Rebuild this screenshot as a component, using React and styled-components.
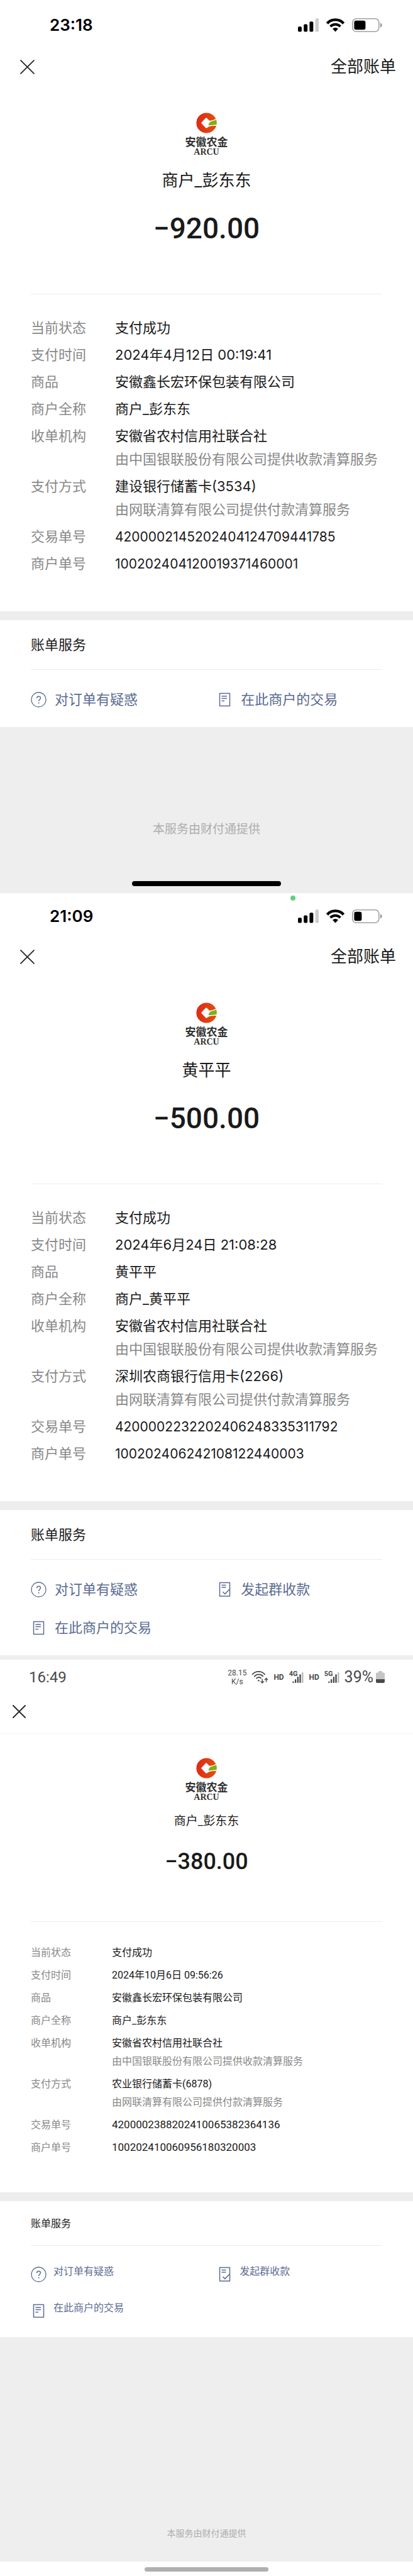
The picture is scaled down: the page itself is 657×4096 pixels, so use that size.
import React from "react";
import styled, { createGlobalStyle } from "styled-components";

const Global = createGlobalStyle`
  *, *::before, *::after { box-sizing: border-box; }
  body { margin: 0; background: #fff; color: #1a1a1a; }
  button { border: 0; padding: 0; background: none; color: inherit; font: inherit; cursor: pointer; }
  a { color: inherit; text-decoration: none; }
  svg { display: block; flex: none; }
`;

const IOS = {
  font: `Inter, "Noto Sans CJK SC", sans-serif`,
  size: 22,
  number: 21,
  line: 37,
  rowGap: 6,
  labelWidth: 134,
  title: 26,
  titleLine: 40,
  amount: 46,
  amountTop: 28,
  amountBottom: 76,
  detailTop: 35,
  detailBottom: 57,
};

const ANDROID = {
  font: `Roboto, "Noto Sans CJK SC", sans-serif`,
  size: 16,
  number: 17,
  line: 29,
  rowGap: 7,
  labelWidth: 129,
  title: 19,
  titleLine: 28,
  amount: 36,
  amountTop: 22,
  amountBottom: 67,
  detailTop: 34,
  detailBottom: 57,
};

const Screen = styled.section`
  display: flex;
  flex-direction: column;
  font-family: ${(p) => p.$t.font};
  font-size: ${(p) => p.$t.size}px;
`;

const StatusBar = styled.div`
  display: flex;
  align-items: center;
  justify-content: space-between;
  height: ${(p) => p.$height}px;
  padding: ${(p) => p.$pad};
`;

const Clock = styled.time`
  font-size: 26px;
  font-weight: 600;
  line-height: 32px;
  color: #000;
`;

const AndroidClock = styled.time`
  font-size: 24px;
  line-height: 32px;
  color: #4a4a4a;
`;

const StatusIcons = styled.div`
  display: flex;
  align-items: center;
  gap: ${(p) => p.$gap}px;
  color: #4a4a4a;
`;

const Speed = styled.span`
  font-size: 12px;
  line-height: 14px;
  text-align: center;
`;

const Hd = styled.span`
  font-size: 12px;
  font-weight: 700;
  line-height: 16px;
`;

const Signal = styled.span`
  display: flex;
  align-items: flex-end;
  height: 19px;
  svg { margin-left: -8px; }
`;

const Network = styled.span`
  align-self: flex-start;
  font-size: 11px;
  font-weight: 700;
  line-height: 9px;
`;

const Percent = styled.span`
  font-size: 25px;
  line-height: 32px;
  margin-right: -4px;
`;

const CameraDot = styled.i`
  position: absolute;
  top: 4px;
  left: 71%;
  width: 8px;
  height: 8px;
  margin-left: -4px;
  border-radius: 50%;
  background: #5fd07f;
`;

const Top = styled.div`
  position: relative;
`;

const NavBar = styled.header`
  display: flex;
  align-items: center;
  justify-content: space-between;
  height: ${(p) => p.$height}px;
  padding: ${(p) => p.$pad};
  border-bottom: ${(p) => (p.$line ? "1px solid #f3f3f3" : "0")};
`;

const AllBills = styled.a`
  font-size: 26px;
  line-height: 40px;
`;

const Merchant = styled.div`
  display: flex;
  flex-direction: column;
  align-items: center;
  padding-top: ${(p) => p.$top}px;
`;

const Logo = styled.figure`
  display: flex;
  flex-direction: column;
  align-items: center;
  margin: 0;
  color: #333;
  font-weight: 700;
`;

const LogoName = styled.span`
  margin-top: 5px;
  font-family: "Liberation Serif", "Noto Sans CJK SC", serif;
  font-size: 17px;
  line-height: 19px;
`;

const LogoLatin = styled.span`
  font-family: "Liberation Serif", serif;
  font-size: 14px;
  line-height: 12px;
`;

const MerchantName = styled.h1`
  margin: ${(p) => p.$top}px 0 0;
  font-size: ${(p) => p.$t.title}px;
  font-weight: 400;
  line-height: ${(p) => p.$t.titleLine}px;
`;

const Amount = styled.strong`
  margin: ${(p) => p.$t.amountTop}px 0 ${(p) => p.$t.amountBottom}px;
  font-family: Roboto, sans-serif;
  font-size: ${(p) => p.$t.amount}px;
  font-weight: 500;
  line-height: 56px;
`;

const Details = styled.dl`
  display: flex;
  flex-direction: column;
  gap: ${(p) => p.$t.rowGap}px;
  margin: 0 49px;
  padding: ${(p) => p.$t.detailTop}px 0 ${(p) => p.$t.detailBottom}px;
  border-top: 1px solid #ececec;
  line-height: ${(p) => p.$t.line}px;
`;

const Row = styled.div`
  display: flex;
`;

const Label = styled.dt`
  flex: none;
  width: ${(p) => p.$t.labelWidth}px;
  color: #888;
`;

const Value = styled.dd`
  margin: 0;
  white-space: nowrap;
  font-size: ${(p) => (p.$number ? p.$t.number : p.$t.size)}px;
`;

const Note = styled.div`
  color: #888;
`;

const Services = styled.section`
  padding: 0 49px ${(p) => p.$bottom}px;
  border-top: 14px solid #ededed;
`;

const ServicesTitle = styled.h2`
  margin: 0;
  padding: ${(p) => p.$pad};
  border-bottom: 1px solid #ececec;
  font-size: inherit;
  font-weight: 400;
  line-height: 32px;
`;

const ServiceGrid = styled.div`
  display: grid;
  grid-template-columns: 53fr 47fr;
  row-gap: ${(p) => p.$gap}px;
  padding-top: ${(p) => p.$top}px;
`;

const ServiceLink = styled.a`
  display: flex;
  align-items: ${(p) => (p.$raised ? "flex-start" : "center")};
  gap: ${(p) => (p.$raised ? 11 : 13)}px;
  height: 32px;
  color: #5b6b92;
  line-height: ${(p) => (p.$raised ? 24 : 32)}px;
  svg { margin-top: ${(p) => (p.$raised ? 4 : 0)}px; }
`;

const Footer = styled.footer`
  display: flex;
  flex-direction: column;
  align-items: center;
  padding-top: ${(p) => p.$top}px;
  background: #eee;
  color: #adadad;
  font-size: ${(p) => p.$size}px;
  line-height: 28px;
`;

const GestureArea = styled.div`
  display: flex;
  justify-content: center;
  width: 100%;
  margin-top: ${(p) => p.$gap}px;
  padding: ${(p) => p.$pad};
  background: ${(p) => (p.$white ? "#fff" : "none")};
`;

const GestureBar = styled.div`
  width: ${(p) => (p.$gray ? "30%" : "36%")};
  height: ${(p) => (p.$gray ? 7 : 8)}px;
  border-radius: 4px;
  background: ${(p) => (p.$gray ? "#b0b0b0" : "#000")};
`;

const CloseIcon = ({ size, weight }) => (
  <svg width={size} height={size} viewBox="0 0 22 22" fill="none" stroke="#2a2a2a" strokeWidth={weight} strokeLinecap="round">
    <path d="M1 1 21 21M21 1 1 21" />
  </svg>
);

const Bars = () => (
  <svg width="33" height="22" viewBox="0 0 183 120">
    <rect x="0" y="72" width="33" height="46" rx="10" />
    <rect x="51" y="52" width="33" height="66" rx="10" />
    <rect x="102" y="28" width="33" height="90" rx="10" />
    <rect x="153" y="1" width="31" height="117" rx="10" fill="#ccc" />
  </svg>
);

const Wifi = () => (
  <svg width="29" height="22" viewBox="290 61 160 121" fill="none" stroke="#000">
    <path d="M298 106A97 97 0 0 1 442 106" strokeWidth="24" />
    <path d="M326 133A63 63 0 0 1 414 133" strokeWidth="22" />
    <path d="M345 153Q370 133 395 153L370 180Z" fill="#000" stroke="none" />
  </svg>
);

const Battery = ({ level }) => (
  <svg width="48" height="22" viewBox="0 0 48 22">
    <rect x="0.8" y="0.8" width="42" height="20.4" rx="6" fill="none" stroke="#a0a0a0" strokeWidth="1.6" />
    <rect x="3.4" y="3.7" width={level} height="14.6" rx="3" />
    <path d="M45 7.5c3.400 1 3.400 6 0 7Z" fill="#909090" />
  </svg>
);

const AndroidWifi = () => (
  <svg width="27" height="20" viewBox="233 71 148 112" fill="none" stroke="currentColor" strokeWidth="10" strokeLinecap="round">
    <path d="M240 101A73 73 0 0 1 350 101M258 119A51 51 0 0 1 334 118M276 136A32 32 0 0 1 316 134" />
    <circle cx="296" cy="156" r="7" fill="currentColor" stroke="none" />
    <path d="M328 145V175M316 165 328 177 340 165M363 167V137M351 148 363 136 375 148" strokeWidth="8" />
  </svg>
);

const AndroidBars = () => (
  <svg width="18" height="17" viewBox="571 87 98 94" fill="currentColor">
    <circle cx="578" cy="174" r="7" />
    <rect x="592" y="148" width="13" height="33" rx="5" />
    <rect x="613" y="126" width="13" height="55" rx="5" />
    <rect x="633" y="105" width="13" height="76" rx="5" />
    <rect x="654" y="87" width="13" height="94" rx="5" fill="#b8b8b8" />
  </svg>
);

const AndroidBattery = () => (
  <svg width="14" height="19" viewBox="0 0 14 19">
    <path d="M4 1.500Q4 0 5.500 0h3Q10 0 10 1.500V2.500h2a2 2 0 0 1 2 2V13H0V4.500a2 2 0 0 1 2-2h2Z" fill="#c4c4c4" />
    <path d="M0 13h14v4a2 2 0 0 1-2 2H2a2 2 0 0 1-2-2Z" fill="#4a4a4a" />
  </svg>
);

const BankMark = () => (
  <svg width="33" height="33" viewBox="151 54 178 178">
    <defs>
      <linearGradient id="coin" x1="0" y1="0.4" x2="1" y2="0.5">
        <stop offset="0" stopColor="#dc2a16" />
        <stop offset="1" stopColor="#e5500e" />
      </linearGradient>
      <clipPath id="coinEdge">
        <circle cx="240" cy="143" r="88" />
      </clipPath>
    </defs>
    <g clipPath="url(#coinEdge)">
      <circle cx="240" cy="143" r="88" fill="url(#coin)" />
      <path d="M233 101Q238 96 243 101L266 124Q300 122 332 102V168Q290 164 262 174L243 186Q238 190 233 185L197 147Q194 143 197 139Z" fill="#fff" />
      <path d="M257 165C258 135 280 127 300 124C312 122 322 117 332 109V154C305 165 285 158 257 165Z" fill="#7fb016" />
    </g>
  </svg>
);

const QuestionIcon = () => (
  <svg width="25" height="25" viewBox="0 0 25 25" fill="none" stroke="currentColor" strokeWidth="1.3">
    <circle cx="12.5" cy="12.5" r="11.5" />
    <path d="M9.700 10.200c0-3.800 5.800-3.800 5.800-.4 0 2.400-2.900 2.500-2.900 5.200" strokeWidth="1.5" />
    <circle cx="12.6" cy="17.8" r="1" fill="currentColor" stroke="none" />
  </svg>
);

const BillIcon = ({ check }) => (
  <svg width="25" height="25" viewBox="0 0 25 25" fill="none" stroke="currentColor" strokeWidth="1.5" strokeLinejoin="round">
    {check ? (
      <>
        <rect x="4.500" y="1.500" width="16" height="21.500" />
        <path d="M7.500 5.500h7M7.500 9h7M9.500 16l3.200 3.600 7.500-7.600" />
      </>
    ) : (
      <>
        <rect x="4.5" y="2.5" width="16" height="20" />
        <path d="M7.500 7h8.500M7.500 10.500h8.500M7.500 14.500h4.500" />
      </>
    )}
  </svg>
);

const ICONS = {
  question: <QuestionIcon />,
  collect: <BillIcon check />,
  bill: <BillIcon />,
};

const MerchantBlock = ({ t, top, nameTop, name, amount }) => (
  <Merchant $top={top}>
    <Logo>
      <BankMark />
      <LogoName>安徽农金</LogoName>
      <LogoLatin>ARCU</LogoLatin>
    </Logo>
    <MerchantName $t={t} $top={nameTop}>{name}</MerchantName>
    <Amount $t={t}>{amount}</Amount>
  </Merchant>
);

const DetailList = ({ t, rows }) => (
  <Details $t={t}>
    {rows.map(([label, value, note]) => (
      <Row key={label}>
        <Label $t={t}>{label}</Label>
        <Value $t={t} $number={/^\d+$/.test(value)}>
          {value}
          {note && <Note>{note}</Note>}
        </Value>
      </Row>
    ))}
  </Details>
);

const ServiceBlock = ({ titlePad, top, gap, bottom, raised, items }) => (
  <Services $bottom={bottom}>
    <ServicesTitle $pad={titlePad}>账单服务</ServicesTitle>
    <ServiceGrid $top={top} $gap={gap}>
      {items.map(([icon, text]) => (
        <ServiceLink key={text} href="#" $raised={raised}>
          {ICONS[icon]}
          {text}
        </ServiceLink>
      ))}
    </ServiceGrid>
  </Services>
);

const IosTop = ({ time, level, height, recording }) => (
  <Top>
    {recording && <CameraDot />}
    <StatusBar $height={height} $pad="0 49px 0 79px">
      <Clock>{time}</Clock>
      <StatusIcons $gap={12}>
        <Bars />
        <Wifi />
        <Battery level={level} />
      </StatusIcons>
    </StatusBar>
    <NavBar $height={54} $pad="0 27px 0 32px">
      <button aria-label="关闭"><CloseIcon size={23} weight={1.8} /></button>
      <AllBills href="#">全部账单</AllBills>
    </NavBar>
  </Top>
);

const CLEAR_IN = "由中国银联股份有限公司提供收款清算服务";
const CLEAR_OUT = "由网联清算有限公司提供付款清算服务";

const billRows = (b) => [
  ["当前状态", "支付成功"],
  ["支付时间", b.time],
  ["商品", b.goods],
  ["商户全称", b.merchant],
  ["收单机构", "安徽省农村信用社联合社", CLEAR_IN],
  ["支付方式", b.card, CLEAR_OUT],
  ["交易单号", b.trade],
  ["商户单号", b.order],
];

export default function App() {
  return (
    <main>
      <Global />

      <Screen $t={IOS}>
        <IosTop time="23:18" level={18} height={79} />
        <MerchantBlock t={IOS} top={46} nameTop={19} name="商户_彭东东" amount="−920.00" />
        <DetailList
          t={IOS}
          rows={billRows({
            time: "2024年4月12日 00:19:41",
            goods: "安徽鑫长宏环保包装有限公司",
            merchant: "商户_彭东东",
            card: "建设银行储蓄卡(3534)",
            trade: "4200002145202404124709441785",
            order: "100202404120019371460001",
          })}
        />
        <ServiceBlock
          titlePad="23px 0"
          top={31}
          gap={29}
          bottom={28}
          items={[["question", "对订单有疑惑"], ["bill", "在此商户的交易"]]}
        />
        <Footer $top={149} $size={19}>
          本服务由财付通提供
          <GestureArea $gap={68} $pad="0 0 11px">
            <GestureBar />
          </GestureArea>
        </Footer>
      </Screen>

      <Screen $t={IOS}>
        <IosTop time="21:09" level={12} height={74} recording />
        <MerchantBlock t={IOS} top={46} nameTop={19} name="黄平平" amount="−500.00" />
        <DetailList
          t={IOS}
          rows={billRows({
            time: "2024年6月24日 21:08:28",
            goods: "黄平平",
            merchant: "商户_黄平平",
            card: "深圳农商银行信用卡(2266)",
            trade: "4200002232202406248335311792",
            order: "100202406242108122440003",
          })}
        />
        <ServiceBlock
          titlePad="23px 0"
          top={31}
          gap={29}
          bottom={28}
          items={[["question", "对订单有疑惑"], ["collect", "发起群收款"], ["bill", "在此商户的交易"]]}
        />
        <Footer $top={7} $size={19} />
      </Screen>

      <Screen $t={ANDROID}>
        <StatusBar $height={55} $pad="0 45px 0 46px">
          <AndroidClock>16:49</AndroidClock>
          <StatusIcons $gap={8}>
            <Speed>28.15<br />K/s</Speed>
            <AndroidWifi />
            <Hd>HD</Hd>
            <Signal><Network>4G</Network><AndroidBars /></Signal>
            <Hd>HD</Hd>
            <Signal><Network>5G</Network><AndroidBars /></Signal>
            <Percent>39%</Percent>
            <AndroidBattery />
          </StatusIcons>
        </StatusBar>
        <NavBar $height={63} $pad="10px 20px 18px" $line>
          <button aria-label="关闭"><CloseIcon size={21} weight={2} /></button>
        </NavBar>
        <MerchantBlock t={ANDROID} top={38} nameTop={18} name="商户_彭东东" amount="−380.00" />
        <DetailList
          t={ANDROID}
          rows={billRows({
            time: "2024年10月6日 09:56:26",
            goods: "安徽鑫长宏环保包装有限公司",
            merchant: "商户_彭东东",
            card: "农业银行储蓄卡(6878)",
            trade: "4200002388202410065382364136",
            order: "100202410060956180320003",
          })}
        />
        <ServiceBlock
          titlePad="20px 0 18px"
          top={29}
          gap={26}
          bottom={26}
          raised
          items={[["question", "对订单有疑惑"], ["collect", "发起群收款"], ["bill", "在此商户的交易"]]}
        />
        <Footer $top={298} $size={14}>
          本服务由财付通提供
          <GestureArea $gap={31} $pad="9px 0 7px" $white>
            <GestureBar $gray />
          </GestureArea>
        </Footer>
      </Screen>
    </main>
  );
}
